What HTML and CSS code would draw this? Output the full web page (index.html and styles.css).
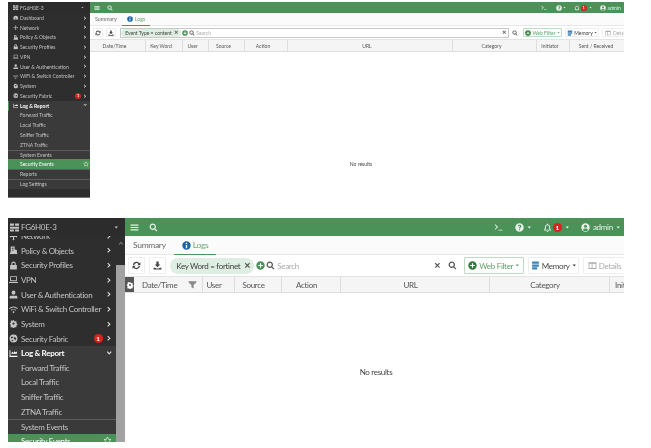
FILE: index.html
```html
<!DOCTYPE html>
<html lang="en">
<head>
<meta charset="utf-8">
<title>FortiGate Security Events</title>
<link rel="stylesheet" href="styles.css">
</head>
<body>
<svg class="defs" width="0" height="0" aria-hidden="true">
  <defs>
    <symbol id="i-menu" viewBox="0 0 16 16"><path d="M1 2.500h14v2.200H1zM1 6.900h14v2.200H1zM1 11.300h14v2.200H1z"/></symbol>
    <symbol id="i-search" viewBox="0 0 16 16"><path fill-rule="evenodd" d="M6.700 1a5.700 5.700 0 0 1 4.600 9l3.700 3.700-1.600 1.600-3.700-3.700A5.700 5.700 0 1 1 6.700 1zm0 2.200a3.500 3.500 0 1 0 0 7 3.500 3.500 0 0 0 0-7z"/></symbol>
    <symbol id="i-chev" viewBox="0 0 16 16"><path d="M5 2l6.500 6L5 14l-1.800-1.900L7.700 8 3.200 3.900z"/></symbol>
    <symbol id="i-down" viewBox="0 0 16 16"><path d="M2 5l6 6.500L14 5l-1.900-1.800L8 7.700 3.900 3.200z"/></symbol>
    <symbol id="i-caret" viewBox="0 0 16 16"><path d="M2 5h12l-6 7z"/></symbol>
    <symbol id="i-dash" viewBox="0 0 16 16"><path fill-rule="evenodd" d="M8 2a7 7 0 0 1 7 7v4H1V9a7 7 0 0 1 7-7zm-1 5v4h2V7z"/></symbol>
    <symbol id="i-net" viewBox="0 0 16 16"><path d="M8 1l2.200 2.500H9V7h3.500V5.800L15 8l-2.500 2.200V9H9v3.500h1.200L8 15l-2.200-2.500H7V9H3.500v1.200L1 8l2.500-2.200V7H7V3.500H5.800z"/></symbol>
    <symbol id="i-policy" viewBox="0 0 16 16"><path d="M3 1h7v5l4 1v3l1 4H1l2-4zM5 3v2h3V3zM5 6.500V8h3V6.500z"/></symbol>
    <symbol id="i-lock" viewBox="0 0 16 16"><path fill-rule="evenodd" d="M8 1a4 4 0 0 1 4 4v2h2v8H2V7h2V5a4 4 0 0 1 4-4zm0 2a2 2 0 0 0-2 2v2h4V5a2 2 0 0 0-2-2z"/></symbol>
    <symbol id="i-vpn" viewBox="0 0 16 16"><path fill-rule="evenodd" d="M2 2h12v9H2zm1.500 1.500v6h9v-6zM0 12.500h16V14H0z"/></symbol>
    <symbol id="i-user" viewBox="0 0 16 16"><path d="M8 1a3.500 3.500 0 0 1 3.500 3.500c0 2-1.500 4-3.500 4s-3.500-2-3.500-4A3.500 3.500 0 0 1 8 1zM2 10h12l1 3v2H1v-2z"/></symbol>
    <symbol id="i-wifi" viewBox="0 0 16 16"><path d="M0 6a11 11 0 0 1 16 0l-1.200 1.200a9.500 9.500 0 0 0-13.600 0zM3 9a7 7 0 0 1 10 0l-1.200 1.200a5.200 5.200 0 0 0-7.600 0zM8 10.500l2 2-2 2-2-2z"/></symbol>
    <symbol id="i-gear" viewBox="0 0 16 16"><path fill-rule="evenodd" d="M6.500 1h3l.4 2 1.500.7 1.800-1.100 2 2.100-1.100 1.800.6 1.500 2 .4v3l-2 .4-.6 1.500 1.100 1.800-2 2-1.800-1.100-1.500.7-.4 2h-3l-.4-2-1.500-.7-1.800 1.100-2-2 1.100-1.800L1.700 10 0 9.500v-3l2-.4.6-1.500L1.500 2.800l2-2.100 1.800 1.100 1.500-.7zM8 5.500a2.500 2.500 0 1 0 0 5 2.500 2.500 0 0 0 0-5z" transform="translate(1.600 1.600) scale(.8)"/></symbol>
    <symbol id="i-fabric" viewBox="0 0 16 16"><path fill-rule="evenodd" d="M8 1a7 7 0 1 1 0 14A7 7 0 0 1 8 1zM5 4L3 7l2 1 3-2zm5 1L8.500 8l2.500 3 2-3zM5 10l-1 1 3 2 1-2z"/></symbol>
    <symbol id="i-log" viewBox="0 0 16 16"><path d="M1 2h1.500v10H15v2H1zM4 8l2-3 2 2 2-3 2 2 2-2v4.500H4z"/></symbol>
    <symbol id="i-star" viewBox="0 0 16 16"><path fill="none" stroke="currentColor" stroke-width="1.600" d="M8 1.800l1.900 4 4.400.5-3.200 3 .8 4.400L8 11.600l-3.900 2.100.8-4.400-3.200-3 4.400-.5z"/></symbol>
    <symbol id="i-device" viewBox="0 0 16 16"><path d="M0 1h7v4H0zM9 1h7v4H9zM0 6.500h16V10H0zM0 11.500h7V15H0zM9 11.500h7V15H9z"/></symbol>
    <symbol id="i-refresh" viewBox="0 0 16 16"><path d="M8 1.500a6.500 6.500 0 0 1 5 2.300L15 2v5.500H9.500l2-2A4.200 4.200 0 0 0 4 7H1.700A6.500 6.500 0 0 1 8 1.500zM1 8.500h5.500l-2 2A4.200 4.200 0 0 0 12 9h2.300A6.500 6.500 0 0 1 3 12.200L1 14z"/></symbol>
    <symbol id="i-download" viewBox="0 0 16 16"><path d="M6 1h4v5h3l-5 5-5-5h3zM1 12h3l2 1.500h4l2-1.500h3v3H1z"/></symbol>
    <symbol id="i-plus" viewBox="0 0 16 16"><path fill-rule="evenodd" d="M8 .5a7.500 7.500 0 1 1 0 15 7.500 7.500 0 0 1 0-15zM7 4v3H4v2h3v3h2V9h3V7H9V4z"/></symbol>
    <symbol id="i-x" viewBox="0 0 16 16"><path d="M3.700 1.800L8 6.100l4.300-4.300 1.900 1.900L9.900 8l4.300 4.300-1.900 1.900L8 9.900l-4.300 4.300-1.900-1.900L6.100 8 1.800 3.700z"/></symbol>
    <symbol id="i-info" viewBox="0 0 16 16"><path fill-rule="evenodd" d="M8 .5a7.500 7.500 0 1 1 0 15 7.500 7.500 0 0 1 0-15zM6.800 3.200v2.300h2.400V3.200zm0 3.600v6h2.400v-6z"/></symbol>
    <symbol id="i-help" viewBox="0 0 16 16"><path fill-rule="evenodd" d="M8 .5a7.500 7.500 0 1 1 0 15 7.500 7.500 0 0 1 0-15zM8 3C6.200 3 5 4 4.800 5.700l2 .3c.1-.7.500-1.100 1.200-1.100s1.100.4 1.100 1c0 1-2.100 1.300-2.100 3.500v.5h2v-.3c0-1 2.300-1.400 2.300-3.800C11.300 4 9.900 3 8 3zM7 11v2h2v-2z"/></symbol>
    <symbol id="i-bell" viewBox="0 0 16 16"><path fill-rule="evenodd" d="M8 1a1 1 0 0 1 1 1v.6A4.500 4.500 0 0 1 12.500 7c0 3 .7 4.500 2 5.500v1h-13v-1c1.300-1 2-2.500 2-5.500A4.500 4.500 0 0 1 7 2.600V2a1 1 0 0 1 1-1zm0 3C6.300 4 5.200 5.200 5.200 7c0 2.300-.4 3.900-1 5h7.600c-.6-1.100-1-2.700-1-5C10.800 5.200 9.700 4 8 4zM6.500 14.300h3a1.500 1.500 0 0 1-3 0z"/></symbol>
    <symbol id="i-account" viewBox="0 0 16 16"><path fill-rule="evenodd" d="M8 .5a7.500 7.500 0 1 1 0 15 7.500 7.500 0 0 1 0-15zM8 3a2.700 2.700 0 1 0 0 5.400A2.700 2.700 0 0 0 8 3zM3.500 12.300a5.800 5.800 0 0 0 9 0C11.800 10.500 10 9.700 8 9.700s-3.800.8-4.500 2.600z"/></symbol>
    <symbol id="i-filter" viewBox="0 0 16 16"><path d="M1 2h14v2l-5 5v6l-4-2V9L1 4z"/></symbol>
    <symbol id="i-memory" viewBox="0 0 16 16"><path d="M2 1h12v4H2zM2 6h12v4H2zM2 11h9v4H2z"/></symbol>
    <symbol id="i-details" viewBox="0 0 16 16"><path fill-rule="evenodd" d="M1 2h14v12H1zm1.500 3v7.500h4V5zM8 5v7.500h5.500V5z"/></symbol>
    <symbol id="i-shell" viewBox="0 0 16 16"><path d="M1 3l1-1 5.500 5L2 12l-1-1 4-4zM8 12h7v1.500H8z"/></symbol>
  </defs>
</svg>

<section class="win win-small">
  <aside class="side">
    <div class="brand"><svg class="ic brand-ic"><use href="#i-device"/></svg><span class="brand-name">FG6H0E-3</span><svg class="ic caret"><use href="#i-caret"/></svg></div>
    <nav class="nav">
      <a class="row"><svg class="ic"><use href="#i-dash"/></svg><span class="lbl">Dashboard</span><svg class="ic chev"><use href="#i-chev"/></svg></a>
      <a class="row"><svg class="ic"><use href="#i-net"/></svg><span class="lbl">Network</span><svg class="ic chev"><use href="#i-chev"/></svg></a>
      <a class="row"><svg class="ic"><use href="#i-policy"/></svg><span class="lbl">Policy &amp; Objects</span><svg class="ic chev"><use href="#i-chev"/></svg></a>
      <a class="row"><svg class="ic"><use href="#i-lock"/></svg><span class="lbl">Security Profiles</span><svg class="ic chev"><use href="#i-chev"/></svg></a>
      <a class="row"><svg class="ic"><use href="#i-vpn"/></svg><span class="lbl">VPN</span><svg class="ic chev"><use href="#i-chev"/></svg></a>
      <a class="row"><svg class="ic"><use href="#i-user"/></svg><span class="lbl">User &amp; Authentication</span><svg class="ic chev"><use href="#i-chev"/></svg></a>
      <a class="row"><svg class="ic"><use href="#i-wifi"/></svg><span class="lbl">WiFi &amp; Switch Controller</span><svg class="ic chev"><use href="#i-chev"/></svg></a>
      <a class="row"><svg class="ic"><use href="#i-gear"/></svg><span class="lbl">System</span><svg class="ic chev"><use href="#i-chev"/></svg></a>
      <a class="row"><svg class="ic"><use href="#i-fabric"/></svg><span class="lbl">Security Fabric</span><span class="badge">1</span><svg class="ic chev"><use href="#i-chev"/></svg></a>
      <a class="row row-open"><svg class="ic"><use href="#i-log"/></svg><span class="lbl">Log &amp; Report</span><svg class="ic chev"><use href="#i-down"/></svg></a>
      <a class="row sub">Forward Traffic</a>
      <a class="row sub">Local Traffic</a>
      <a class="row sub">Sniffer Traffic</a>
      <a class="row sub">ZTNA Traffic</a>
      <a class="row sub sep">System Events</a>
      <a class="row sub active"><span class="lbl">Security Events</span><svg class="ic star"><use href="#i-star"/></svg></a>
      <a class="row sub sep">Reports</a>
      <a class="row sub sep">Log Settings</a>
    </nav>
  </aside>
  <main class="main">
    <header class="top">
      <svg class="ic"><use href="#i-menu"/></svg><svg class="ic"><use href="#i-search"/></svg>
      <span class="top-right">
        <svg class="ic"><use href="#i-shell"/></svg>
        <span class="ti"><svg class="ic"><use href="#i-help"/></svg><svg class="ic tcaret"><use href="#i-caret"/></svg></span>
        <span class="ti"><svg class="ic"><use href="#i-bell"/></svg><span class="badge">1</span><svg class="ic tcaret"><use href="#i-caret"/></svg></span>
        <span class="ti"><svg class="ic"><use href="#i-account"/></svg><span>admin</span></span>
      </span>
    </header>
    <div class="tabs"><span class="tab">Summary</span><span class="tab tab-on"><svg class="ic"><use href="#i-info"/></svg>Logs</span></div>
    <div class="bar">
      <button class="btn sq"><svg class="ic"><use href="#i-refresh"/></svg></button>
      <button class="btn sq"><svg class="ic"><use href="#i-download"/></svg></button>
      <div class="search search-focus">
        <span class="chip">Event Type = content<svg class="ic"><use href="#i-x"/></svg></span>
        <svg class="ic plus"><use href="#i-plus"/></svg>
        <svg class="ic"><use href="#i-search"/></svg>
        <span class="ph">Search</span>
        <svg class="ic clear"><use href="#i-x"/></svg>
      </div>
      <svg class="ic go"><use href="#i-search"/></svg>
      <button class="btn wf"><svg class="ic"><use href="#i-plus"/></svg>Web Filter<svg class="ic tcaret"><use href="#i-caret"/></svg></button>
      <button class="btn mem"><svg class="ic"><use href="#i-memory"/></svg>Memory<svg class="ic tcaret"><use href="#i-caret"/></svg></button>
      <button class="btn det"><svg class="ic"><use href="#i-details"/></svg>Details</button>
    </div>
    <div class="thead">
      <span class="th">Date/Time</span><span class="th">Key Word</span><span class="th">User</span><span class="th">Source</span><span class="th">Action</span><span class="th">URL</span><span class="th">Category</span><span class="th">Initiator</span><span class="th th-last">Sent / Received</span>
    </div>
    <div class="empty">No results</div>
  </main>
</section>

<section class="win win-large">
  <aside class="side">
    <div class="brand"><svg class="ic brand-ic"><use href="#i-device"/></svg><span class="brand-name">FG6H0E-3</span><svg class="ic caret"><use href="#i-caret"/></svg></div>
    <div class="side-body">
      <nav class="nav nav-scrolled">
        <a class="row"><svg class="ic"><use href="#i-net"/></svg><span class="lbl">Network</span><svg class="ic chev"><use href="#i-chev"/></svg></a>
        <a class="row"><svg class="ic"><use href="#i-policy"/></svg><span class="lbl">Policy &amp; Objects</span><svg class="ic chev"><use href="#i-chev"/></svg></a>
        <a class="row"><svg class="ic"><use href="#i-lock"/></svg><span class="lbl">Security Profiles</span><svg class="ic chev"><use href="#i-chev"/></svg></a>
        <a class="row"><svg class="ic"><use href="#i-vpn"/></svg><span class="lbl">VPN</span><svg class="ic chev"><use href="#i-chev"/></svg></a>
        <a class="row"><svg class="ic"><use href="#i-user"/></svg><span class="lbl">User &amp; Authentication</span><svg class="ic chev"><use href="#i-chev"/></svg></a>
        <a class="row"><svg class="ic"><use href="#i-wifi"/></svg><span class="lbl">WiFi &amp; Switch Controller</span><svg class="ic chev"><use href="#i-chev"/></svg></a>
        <a class="row"><svg class="ic"><use href="#i-gear"/></svg><span class="lbl">System</span><svg class="ic chev"><use href="#i-chev"/></svg></a>
        <a class="row"><svg class="ic"><use href="#i-fabric"/></svg><span class="lbl">Security Fabric</span><span class="badge">1</span><svg class="ic chev"><use href="#i-chev"/></svg></a>
        <a class="row row-open"><svg class="ic"><use href="#i-log"/></svg><span class="lbl">Log &amp; Report</span><svg class="ic chev"><use href="#i-down"/></svg></a>
        <a class="row sub">Forward Traffic</a>
        <a class="row sub">Local Traffic</a>
        <a class="row sub">Sniffer Traffic</a>
        <a class="row sub">ZTNA Traffic</a>
        <a class="row sub sep">System Events</a>
        <a class="row sub active"><span class="lbl">Security Events</span><svg class="ic star"><use href="#i-star"/></svg></a>
      </nav>
      <div class="gutter"><svg class="ic gutter-up"><use href="#i-down"/></svg><span class="thumb"></span></div>
    </div>
  </aside>
  <main class="main">
    <header class="top">
      <svg class="ic"><use href="#i-menu"/></svg><svg class="ic"><use href="#i-search"/></svg>
      <span class="top-right">
        <svg class="ic"><use href="#i-shell"/></svg>
        <span class="ti"><svg class="ic"><use href="#i-help"/></svg><svg class="ic tcaret"><use href="#i-caret"/></svg></span>
        <span class="ti"><svg class="ic"><use href="#i-bell"/></svg><span class="badge">1</span><svg class="ic tcaret"><use href="#i-caret"/></svg></span>
        <span class="ti"><svg class="ic"><use href="#i-account"/></svg><span>admin</span><svg class="ic tcaret"><use href="#i-caret"/></svg></span>
      </span>
    </header>
    <div class="tabs"><span class="tab">Summary</span><span class="tab tab-on"><svg class="ic"><use href="#i-info"/></svg>Logs</span></div>
    <div class="bar">
      <button class="btn sq"><svg class="ic"><use href="#i-refresh"/></svg></button>
      <button class="btn sq"><svg class="ic"><use href="#i-download"/></svg></button>
      <div class="search">
        <span class="chip">Key Word = fortinet<svg class="ic"><use href="#i-x"/></svg></span>
        <svg class="ic plus"><use href="#i-plus"/></svg>
        <svg class="ic"><use href="#i-search"/></svg>
        <span class="ph">Search</span>
        <svg class="ic clear"><use href="#i-x"/></svg>
      </div>
      <svg class="ic go"><use href="#i-search"/></svg>
      <button class="btn wf"><svg class="ic"><use href="#i-plus"/></svg>Web Filter<svg class="ic tcaret"><use href="#i-caret"/></svg></button>
      <button class="btn mem"><svg class="ic"><use href="#i-memory"/></svg>Memory<svg class="ic tcaret"><use href="#i-caret"/></svg></button>
      <button class="btn det"><svg class="ic"><use href="#i-details"/></svg>Details</button>
    </div>
    <div class="thead">
      <span class="th th-gear"><svg class="ic"><use href="#i-gear"/></svg></span>
      <span class="th th-date">Date/Time<svg class="ic"><use href="#i-filter"/></svg></span><span class="th">User</span><span class="th">Source</span><span class="th">Action</span><span class="th">URL</span><span class="th">Category</span><span class="th th-left">Initiator</span>
    </div>
    <div class="empty">No results</div>
  </main>
</section>
</body>
</html>
```

FILE: styles.css
```css
* { box-sizing: border-box; }
html, body { margin: 0; padding: 0; background: #fff; }
body { font-family: Lato, "Open Sans", sans-serif; color: #555; width: 651px; height: 448px; overflow: hidden; }
.defs { position: absolute; }

.win { display: flex; overflow: hidden; margin-left: 8px; width: 616px; }
.win-small {
  --fs: 5px; --ls: 0; --ic: 6px; --sic: 5.5px; --row: 9.75px; --brand: 11px; --side: 82px;
  --padl: 5px; --padr: 3px; --lblgap: 1.5px; --subpad: 12px;
  --top: 11px; --tabs: 13px; --bar: 13px; --head: 13px; --sq: 10px; --bargap: 3px;
  --wf: 39px; --mem: 34px; --det: 34px; --detover: -12px; --tabpad: 5px; --gomr: 2px; --clearpad: 2px;
  --thpad: 6px; --topgap: 7px; --toppad: 4px; --emptytop: 109px; --emptyleft: 8px;
  height: 196px; margin-top: 2px; filter: blur(.45px);
}
.win-large {
  --fs: 8px; --ls: -.3px; --ic: 9px; --sic: 9px; --row: 14.65px; --brand: 18px; --side: 117px;
  --padl: 1px; --padr: 4px; --lblgap: 3px; --subpad: 13px;
  --top: 18px; --tabs: 19px; --bar: 21px; --head: 17px; --sq: 17px; --bargap: 4px;
  --wf: 60px; --mem: 51px; --det: 60px; --detover: -19px; --tabpad: 8px; --gomr: 3px; --clearpad: 3px;
  --thpad: 9px; --topgap: 10px; --toppad: 5px; --emptytop: 74px; --emptyleft: 3px;
  height: 224px; margin-top: 20px; filter: blur(.35px);
}

.ic { width: var(--ic); height: var(--ic); fill: currentColor; flex: none; display: block; }

/* sidebar */
.side { width: var(--side); flex: none; background: #2e2e2e; color: #c4c4c4; font-size: var(--fs); letter-spacing: var(--ls); display: flex; flex-direction: column; }
.win-small .side { border-bottom: 1px solid #777; }
.side .ic { width: var(--sic); height: var(--sic); }
.brand { height: var(--brand); display: flex; align-items: center; padding: 0 var(--padr) 0 var(--padl); background: #2c2c2c; flex: none; gap: 1.5px; }
.win-large .brand { padding-left: 2px; position: relative; z-index: 2; gap: 2px; }
.brand-name { flex: 1; }
.side .caret { width: calc(var(--ic) * .5); height: calc(var(--ic) * .5); margin-right: 3px; }
.row { display: flex; align-items: center; height: var(--row); padding: 0 var(--padr) 0 var(--padl); gap: var(--lblgap); white-space: nowrap; }
.lbl { flex: 1; }
.side .chev { width: calc(var(--ic) * .72); height: calc(var(--ic) * .72); color: #ddd; }
.row-open { color: #fff; font-weight: 700; background: #3a3a3a; }
.win-small .row-open { border-left: 1px solid #4a9257; padding-left: 4px; }
.sub { padding-left: var(--subpad); background: #3a3a3a; }
.win-small .sub { padding-left: 12px; padding-right: 1px; }
.sep { border-top: 1px solid #5c5c5c; }
.active { background: #4a9257; color: #fff; }
.side .star { color: #d5e8d8; width: var(--ic); height: var(--ic); }
.badge { background: #d9231e; color: #fff; border-radius: 50%; font-size: calc(var(--fs) * .8); font-weight: 700; letter-spacing: 0; width: var(--ic); height: var(--ic); display: flex; align-items: center; justify-content: center; flex: none; }

.side-body { flex: 1; display: flex; min-height: 0; }
.nav-scrolled { flex: 1; margin-top: -7.3px; min-width: 0; }
.gutter { width: 9px; flex: none; background: #2e2e2e; display: flex; flex-direction: column; color: #888; position: relative; z-index: 1; }
.side .gutter-up { width: 6px; height: 6px; margin: 4px auto 0; transform: rotate(180deg); }
.thumb { margin-top: 19px; flex: 1; background: #a2a2a2; }

/* main */
.main { flex: 1; min-width: 0; display: flex; flex-direction: column; background: #fff; overflow: hidden; letter-spacing: var(--ls); }
.top { height: var(--top); background: #4a9257; color: #e8f2ea; display: flex; align-items: center; font-size: var(--fs); flex: none; padding: 0 calc(var(--toppad) * .8) 0 var(--toppad); gap: var(--topgap); }
.top-right { margin-left: auto; display: flex; align-items: center; gap: calc(var(--ic) * 1.35); }
.ti { display: flex; align-items: center; gap: calc(var(--ic) * .3); }
.tcaret { width: calc(var(--ic) * .5); height: calc(var(--ic) * .5); }
.ti .badge { margin-left: calc(var(--ic) * -.25); }

.tabs { height: var(--tabs); display: flex; align-items: stretch; background: #fbfbfb; border-bottom: 1px solid #e8e8e8; font-size: calc(var(--fs) * 1.06); flex: none; }
.tab { display: flex; align-items: center; gap: 2px; padding: 0 var(--tabpad); color: #666; border-bottom: 1px solid transparent; margin-bottom: -1px; }
.tab-on { color: #6fa87a; border-bottom-color: #4a9257; }
.tab-on .ic { color: #1e63a8; }

.bar { height: var(--bar); display: flex; align-items: center; gap: var(--bargap); padding: 0 0 0 3px; font-size: var(--fs); background: #fff; flex: none; }
.btn { font: inherit; letter-spacing: inherit; color: #444; height: calc(var(--bar) - 4px); background: #fff; border: 1px solid #eee; border-radius: 1px; display: flex; align-items: center; justify-content: center; gap: calc(var(--ic) * .25); padding: 0; white-space: nowrap; flex: none; overflow: hidden; }
.btn.sq { width: var(--sq); }
.search { flex: 1; min-width: 0; height: calc(var(--bar) - 3px); display: flex; align-items: center; gap: calc(var(--ic) * .2); padding: 0 var(--clearpad) 0 0; color: #555; }
.search-focus { border: 1.5px solid #c9c9c9; margin-left: 1px; }
.chip { background: #dfeee2; border-radius: 99px; display: flex; align-items: center; gap: calc(var(--ic) * .35); height: calc(var(--bar) - 5px); padding: 0 calc(var(--ic) * .4) 0 calc(var(--ic) * .7); color: #3d3d3d; white-space: nowrap; }
.chip .ic, .clear { width: calc(var(--ic) * .75); height: calc(var(--ic) * .75); color: #555; }
.plus { color: #4a9257; }
.ph { flex: 1; color: #aaa; }
.go { color: #555; margin-right: var(--gomr); }
.wf { color: #5fa06c; border-color: #bcdcc3; width: var(--wf); }
.wf .ic:first-child { color: #2f7d3e; }
.mem { width: var(--mem); }
.mem .ic:first-child { color: #3f83b8; }
.det { color: #aaa; width: var(--det); margin-right: var(--detover); justify-content: flex-start; padding-left: calc(var(--ic) * .4); }

.thead { height: var(--head); display: grid; background: #f5f5f5; border-top: 1px solid #e4e4e4; border-bottom: 1px solid #ddd; flex: none; font-size: var(--fs); overflow: hidden; }
.win-small .thead { grid-template-columns: 56px 37px 26px 36px 43px 165px 84px 33px 1fr; }
.win-large .thead { grid-template-columns: 9px 69px 32px 47px 59px 149px 120px 1fr; }
.th { display: flex; align-items: center; justify-content: center; padding-right: var(--thpad); border-right: 1px solid #ddd; color: #555; white-space: nowrap; overflow: hidden; }
.th:last-child { border-right: 0; }
.th-last { padding-right: 2px; }
.th-gear { background: #555; color: #fff; border: 0; padding: 0; }
.th-gear .ic { width: 8px; height: 8px; }
.th-date { justify-content: space-between; padding: 0 5px 0 8px; }
.th-date .ic { color: #888; }
.th-left { justify-content: flex-start; padding: 0 0 0 5px; }

.empty { flex: 1; display: flex; align-items: flex-start; justify-content: center; color: #444; font-size: var(--fs); padding-top: var(--emptytop); padding-left: var(--emptyleft); }
```
